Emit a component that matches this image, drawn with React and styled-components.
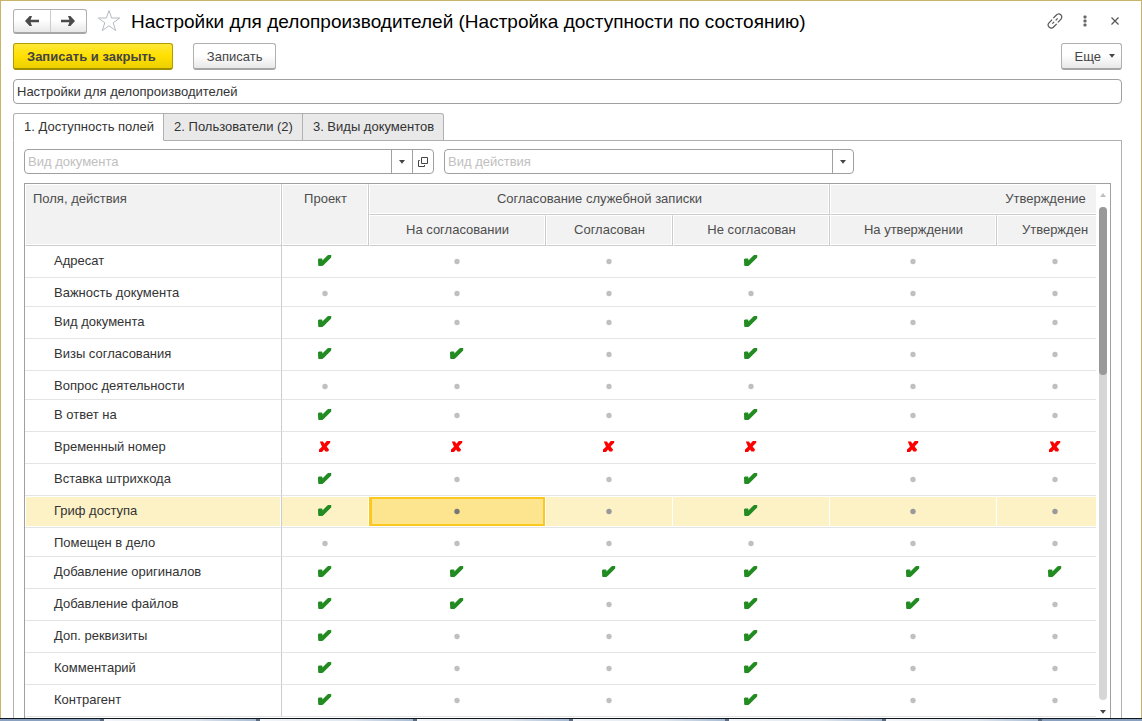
import React from 'react';
import styled, { createGlobalStyle, css } from 'styled-components';

const Global = createGlobalStyle`
  * { box-sizing: border-box; }
  html, body { margin: 0; }
  body, button, input { font-family: "Liberation Sans", Arial, sans-serif; font-size: 13px; color: #333; }
`;

const Page = styled.div`
  display: flex;
  flex-direction: column;
  height: 100vh;
  overflow: hidden;
`;

const Window = styled.main`
  flex: 1;
  min-height: 0;
  display: flex;
  flex-direction: column;
  padding: 8px 19px 0 12px;
  border: 1px solid #c8b468;
  border-bottom: 0;
  background: #fff;
`;

const TitleBar = styled.header`
  display: flex;
  align-items: center;
  height: 25px;
  margin-right: -8px;
`;

const raised = css`
  border: 1px solid #b0b0b0;
  border-bottom: 2px solid #a6a6a6;
  border-radius: 3px;
  background: linear-gradient(#fff 45%, #e8e8e8);
`;

const NavGroup = styled.div`
  ${raised}
  display: flex;
  width: 74px;
  height: 25px;
`;

const NavButton = styled.button`
  flex: 1;
  display: flex;
  align-items: center;
  justify-content: center;
  padding: 0;
  border: 0;
  background: none;
  & + & { border-left: 1px solid #ccc; }
`;

const IconButton = styled.button`
  display: flex;
  align-items: center;
  justify-content: center;
  width: ${p => p.$w || 30}px;
  height: 25px;
  padding: 0 0 2px;
  border: 0;
  background: none;
`;

const Title = styled.h1`
  flex: 1;
  margin: 0;
  font-size: 19px;
  line-height: 24px;
  font-weight: 400;
  color: #000;
  white-space: nowrap;
`;

const Commands = styled.div`
  display: flex;
  gap: 20px;
  margin-top: 9px;
`;

const Button = styled.button`
  ${raised}
  height: 27px;
  padding: 0 13px;
  color: #444;
  ${p => p.$primary && css`
    padding: 0 16px 0 13px;
    font-weight: 700;
    border-color: #b09b00;
    border-bottom-color: #a08d00;
    background: linear-gradient(#ffe838, #ffe000 50%, #ecd000);
  `}
  ${p => p.$menu && css`
    display: flex;
    align-items: center;
    gap: 8px;
    margin-left: auto;
    padding: 0 6px 0 13px;
  `}
`;

const NameInput = styled.input`
  width: 100%;
  height: 25px;
  margin-top: 9px;
  padding: 0 3px;
  border: 1px solid #a0a0a0;
  border-radius: 4px;
`;

const Tabs = styled.div`
  display: flex;
  margin-top: 9px;
  height: 28px;
  position: relative;
  margin-bottom: -1px;
`;

const Tab = styled.button`
  padding: 0 9px 2px 10px;
  border: 1px solid #b0b0b0;
  border-left-width: ${p => (p.$active ? 1 : 0)}px;
  background: ${p => (p.$active ? '#fff' : '#e9e9e9')};
  border-bottom-color: ${p => (p.$active ? '#fff' : '#b0b0b0')};
  &:first-child { border-top-left-radius: 3px; }
  &:last-child { border-top-right-radius: 3px; }
`;

const Panel = styled.section`
  flex: 1;
  min-height: 0;
  display: flex;
  flex-direction: column;
  padding: 8px 10px 0;
  border: 1px solid #b0b0b0;
  border-bottom: 0;
`;

const Filters = styled.div`
  display: flex;
  gap: 10px;
`;

const Combo = styled.div`
  display: flex;
  width: 410px;
  height: 25px;
  border: 1px solid #a0a0a0;
  border-radius: 4px;
  overflow: hidden;
`;

const ComboInput = styled.input`
  flex: 1;
  min-width: 0;
  padding: 0 3px;
  border: 0;
  background: none;
  &::placeholder { color: #c0c0c0; opacity: 1; }
`;

const ComboButton = styled.button`
  display: flex;
  align-items: center;
  justify-content: center;
  width: 21px;
  padding: 0;
  border: 0;
  border-left: 1px solid #a0a0a0;
  background: none;
`;

const GridFrame = styled.div`
  flex: 1;
  min-height: 0;
  display: flex;
  margin-top: 9px;
  border: 1px solid #a0a0a0;
  border-bottom: 0;
`;

const Viewport = styled.div`
  flex: 1;
  min-width: 0;
  overflow: hidden;
`;

const Table = styled.table`
  table-layout: fixed;
  width: 1236px;
  border-collapse: separate;
  border-spacing: 0;
`;

const Head = styled.th`
  height: 31px;
  padding: ${p => (p.$left ? '6px 7px' : '6px 0')};
  border: 1px solid #fff;
  border-right-color: #ccc;
  border-bottom-color: #ccc;
  box-shadow: inset -1px -1px #fff;
  background: #f2f2f2;
  line-height: 16px;
  font-weight: 400;
  color: #4d4d4d;
  text-align: ${p => (p.$left ? 'left' : 'center')};
  vertical-align: top;
`;

const Row = styled.tr`
  height: ${p => (p.$short ? 29 : 32)}px;
`;

const NameCell = styled.th`
  padding: 7px 0 0 29px;
  border-right: 1px solid #ccc;
  border-bottom: 1px solid #e4e4e4;
  font-weight: 400;
  line-height: 16px;
  text-align: left;
  vertical-align: top;
  box-shadow: ${p => (p.$current ? 'inset 0 0 0 1px #fff' : 'none')};
  background: ${p => (p.$current ? '#fdf2c6' : '#fff')};
`;

const Cell = styled.td`
  padding: 9px 1px 0 0;
  border-bottom: 1px solid #e4e4e4;
  vertical-align: top;
  ${p => p.$current && css`
    background: #fdf2c6;
    box-shadow: inset -1px 1px #fff, inset 0 -1px #fff;
  `}
  ${p => p.$selected && css`
    background: #fde48e;
    box-shadow: inset -1px 1px #fff, inset 0 -1px #fff, inset 0 0 0 3px #fac81e;
  `}
  svg { display: block; margin: 0 auto; }
`;

const ScrollBar = styled.div`
  width: 14px;
  display: flex;
  flex-direction: column;
  align-items: center;
  padding: 9px 0 4px;
  gap: 10px;
`;

const ScrollTrack = styled.div`
  flex: 1;
  width: 8px;
  border-radius: 4px;
  background: #d6d6d6;
`;

const ScrollThumb = styled.div`
  height: 34%;
  border-radius: 4px;
  background: #999;
`;

const Taskbar = styled.footer`
  display: flex;
  gap: 4px;
  height: 3px;
  border-top: 1px solid #10161e;
  background: #5c6b80;
`;

const TaskSlot = styled.div`
  flex: ${p => (p.$dark ? '0 0 100px' : '1')};
  background: ${p => (p.$dark ? '#8aa2c0' : 'linear-gradient(90deg, #f2f5f9, #dfe6ee 60%, #a9bcd4)')};
`;

const Arrow = ({ back }) => (
  <svg width="14" height="10" viewBox="0 0 14 10" aria-hidden="true">
    <path d={back ? 'M0 5 4.6 0H7L5.6 3.8H14V6.2H5.6L7 10H4.6Z' : 'M14 5 9.4 0H7L8.4 3.8H0V6.2H8.4L7 10H9.4Z'} fill="#4a4a4a" />
  </svg>
);

const Star = () => (
  <svg width="24" height="23" viewBox="0 0 24 23" aria-hidden="true">
    <path d="M12 1.5 14.6 9H22.7L16.2 13.8 18.7 21.6 12 16.8 5.3 21.6 7.8 13.8 1.3 9H9.4Z" fill="#fff" stroke="#b4bac0" />
  </svg>
);

const Link = () => (
  <svg width="16" height="16" viewBox="0 0 16 16" fill="none" stroke="#555" strokeWidth="1.2" aria-hidden="true">
    <path d="M6.3 5.2 9.4 2a3 3 0 0 1 4.6 4.1L10.9 9.4M9.7 10.8 6.6 14A3 3 0 0 1 2 9.9L5.1 6.6M5.3 10.7 7.2 8.8M8.7 7.3 10.6 5.4" />
  </svg>
);

const Dots = () => (
  <svg width="4" height="12" viewBox="0 0 4 12" fill="#666" aria-hidden="true">
    <rect x=".5" y=".5" width="3" height="3" rx="1" />
    <rect x=".5" y="4.5" width="3" height="3" rx="1" />
    <rect x=".5" y="8.5" width="3" height="3" rx="1" />
  </svg>
);

const Close = () => (
  <svg width="8" height="8" viewBox="0 0 8 8" stroke="#555" strokeWidth="1.2" aria-hidden="true">
    <path d="M.5.5l7 7M7.5.5l-7 7" />
  </svg>
);

const Caret = ({ up, color = '#444' }) => (
  <svg width="6" height="4" viewBox="0 0 6 4" aria-hidden="true">
    <path d={up ? 'M0 4H6L3 0Z' : 'M0 0H6L3 3.8Z'} fill={color} />
  </svg>
);

const OpenIcon = () => (
  <svg width="10" height="10" viewBox="0 0 10 10" fill="none" stroke="#444" aria-hidden="true">
    <path d="M3.5.5H9.5V6.5H3.5ZM1.8 3.5H.5V9.5H6.5V8" />
  </svg>
);

const Check = () => (
  <svg width="14" height="11" viewBox="0 0 14 11" role="img" aria-label="Да">
    <path d="M0 4.2 1 3.4H3.8L4.4 4V5.4L9.4.6 10.4 0H13.2V2.4L6.2 9.6 4.4 11H.8L.2 10.2Z" fill="#228b22" />
  </svg>
);

const Cross = () => (
  <svg width="12" height="11" viewBox="0 0 12 11" role="img" aria-label="Нет">
    <path d="M.8.6H4L5.4 2.7 7.8 0H11.2V1.8L7.6 5.4 10 8.6 9.2 10.4H6.4L5.1 8.6 3 11H0V8.6L3 5.8Z" fill="#f00" />
  </svg>
);

const Dot = ({ color }) => (
  <svg width="6" height="11" viewBox="0 0 6 11" role="img" aria-label="Не задано">
    <circle cx="3" cy="6.5" r="2.7" fill={color} />
  </svg>
);

const columns = [257, 87, 177, 127, 157, 167, 116, 148];
const states = ['На согласовании', 'Согласован', 'Не согласован', 'На утверждении', 'Утвержден', ''];

const rows = [
  ['Адресат', '+..+...'],
  ['Важность документа', '.......', true],
  ['Вид документа', '+..+...'],
  ['Визы согласования', '++.+...'],
  ['Вопрос деятельности', '.......', true],
  ['В ответ на', '+..+...'],
  ['Временный номер', 'xxxxxxx'],
  ['Вставка штрихкода', '+..+...'],
  ['Гриф доступа', '+..+...'],
  ['Помещен в дело', '.......', true],
  ['Добавление оригиналов', '+++++++'],
  ['Добавление файлов', '++.++..'],
  ['Доп. реквизиты', '+..+...'],
  ['Комментарий', '+..+...'],
  ['Контрагент', '+..+...'],
];
const currentRow = 8;
const selectedColumn = 1;

function Mark({ value, current, selected }) {
  if (value === '+') return <Check />;
  if (value === 'x') return <Cross />;
  return <Dot color={selected ? '#777' : current ? '#999' : '#c0c0c0'} />;
}

export default function App() {
  return (
    <Page>
      <Global />
      <Window>
        <TitleBar>
          <NavGroup>
            <NavButton aria-label="Назад"><Arrow back /></NavButton>
            <NavButton aria-label="Вперед"><Arrow /></NavButton>
          </NavGroup>
          <IconButton $w={44} aria-label="В избранное"><Star /></IconButton>
          <Title>Настройки для делопроизводителей (Настройка доступности по состоянию)</Title>
          <IconButton aria-label="Ссылка"><Link /></IconButton>
          <IconButton aria-label="Меню"><Dots /></IconButton>
          <IconButton aria-label="Закрыть"><Close /></IconButton>
        </TitleBar>
        <Commands>
          <Button $primary>Записать и закрыть</Button>
          <Button>Записать</Button>
          <Button $menu>Еще <Caret /></Button>
        </Commands>
        <NameInput aria-label="Наименование" defaultValue="Настройки для делопроизводителей" />
        <Tabs role="tablist">
          <Tab role="tab" aria-selected="true" $active>1. Доступность полей</Tab>
          <Tab role="tab" aria-selected="false">2. Пользователи (2)</Tab>
          <Tab role="tab" aria-selected="false">3. Виды документов</Tab>
        </Tabs>
        <Panel>
          <Filters>
            <Combo>
              <ComboInput aria-label="Вид документа" placeholder="Вид документа" />
              <ComboButton aria-label="Выбрать вид документа"><Caret /></ComboButton>
              <ComboButton aria-label="Открыть вид документа"><OpenIcon /></ComboButton>
            </Combo>
            <Combo>
              <ComboInput aria-label="Вид действия" placeholder="Вид действия" />
              <ComboButton aria-label="Выбрать вид действия"><Caret /></ComboButton>
            </Combo>
          </Filters>
          <GridFrame>
            <Viewport>
              <Table>
                <colgroup>{columns.map((w, i) => <col key={i} width={w} />)}</colgroup>
                <thead>
                  <tr>
                    <Head rowSpan={2} $left>Поля, действия</Head>
                    <Head rowSpan={2}>Проект</Head>
                    <Head colSpan={3}>Согласование служебной записки</Head>
                    <Head colSpan={3}>Утверждение</Head>
                  </tr>
                  <tr>{states.map(s => <Head key={s}>{s}</Head>)}</tr>
                </thead>
                <tbody>
                  {rows.map(([name, marks, short], r) => (
                    <Row key={name} $short={short}>
                      <NameCell scope="row" $current={r === currentRow}>{name}</NameCell>
                      {[...marks].map((value, c) => {
                        const current = r === currentRow;
                        const selected = current && c === selectedColumn;
                        return (
                          <Cell key={c} $current={current} $selected={selected}>
                            <Mark value={value} current={current} selected={selected} />
                          </Cell>
                        );
                      })}
                    </Row>
                  ))}
                </tbody>
              </Table>
            </Viewport>
            <ScrollBar>
              <Caret up color="#c0c0c0" />
              <ScrollTrack><ScrollThumb /></ScrollTrack>
              <Caret />
            </ScrollBar>
          </GridFrame>
        </Panel>
      </Window>
      <Taskbar>
        <TaskSlot $dark /><TaskSlot /><TaskSlot /><TaskSlot /><TaskSlot /><TaskSlot /><TaskSlot /><TaskSlot $dark />
      </Taskbar>
    </Page>
  );
}
